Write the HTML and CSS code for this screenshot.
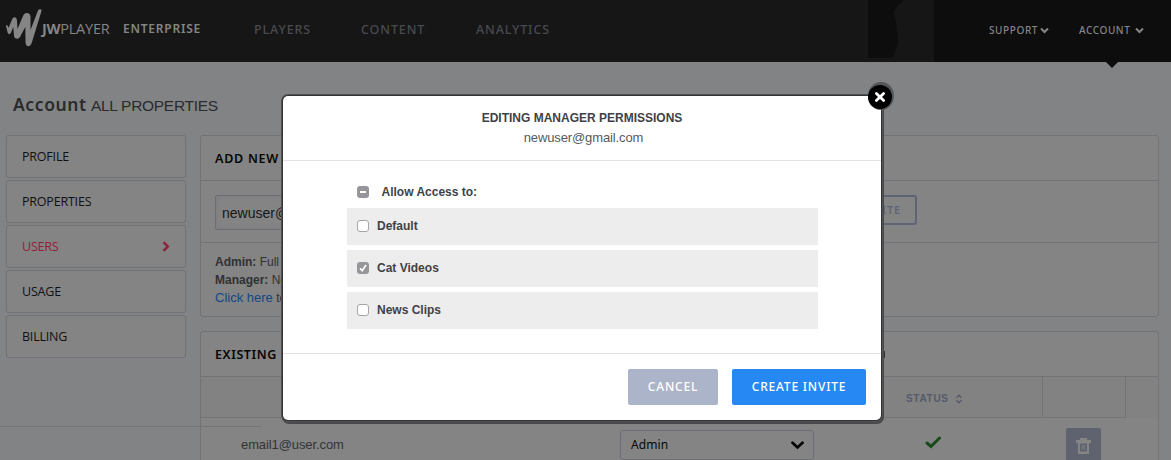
FILE: index.html
```html
<!DOCTYPE html>
<html lang="en">
<head>
<meta charset="utf-8">
<title>Account – Users</title>
<link rel="stylesheet" href="styles.css">
</head>
<body>
<header class="topbar">
  <svg class="topbar-art" width="36" height="59" viewBox="0 0 36 59"><path d="M0 0H35V2C30 4 26 9 26 14C28 22 30 32 30 40C30 49 26 49 26 57C20 59 8 57 0 58Z" fill="#0d0d0d"/></svg>
  <div class="brand">
    <svg class="logo" width="37" height="40" viewBox="0 0 37 40"><path d="M1 18C1 16 3 17 3.500 20L7 11.500C8.500 8 12 9 12 13L12.500 21L18 8C19.500 3.500 25.500 4 25.500 9L25.500 22L33 2.500C34 .5 37 1 36.500 3L27 34C25.500 40 20.500 39.500 20.500 34L20.300 19L15 29C13 32 9.500 31 9 28L8.300 19L6 24.500C5 27 3 26.500 2.500 24Z" fill="#858585"/></svg>
    <span class="brand-name"><b>JW</b>PLAYER</span>
    <span class="brand-plan">ENTERPRISE</span>
  </div>
  <nav class="main-nav"><a class="n-players">PLAYERS</a><a class="n-content">CONTENT</a><a class="n-analytics">ANALYTICS</a></nav>
  <div class="user-nav">
    <a class="support">SUPPORT</a><svg class="caret" width="9" height="7" viewBox="0 0 9 7"><path d="M1 1.500L4.500 5L8 1.500"/></svg>
    <a class="account">ACCOUNT</a><svg class="caret" width="9" height="7" viewBox="0 0 9 7"><path d="M1 1.500L4.500 5L8 1.500"/></svg>
    <i class="notch"></i>
  </div>
</header>
<h1 class="title"><b>Account</b><span>ALL PROPERTIES</span></h1>
<div class="layout">
  <aside class="side">
    <ul class="menu">
      <li><span>PROFILE</span></li>
      <li><span>PROPERTIES</span></li>
      <li class="active"><span>USERS</span><svg width="8" height="11" viewBox="0 0 8 11"><path d="M1.500 1.200L5.800 5.500L1.500 9.800"/></svg></li>
      <li><span>USAGE</span></li>
      <li><span>BILLING</span></li>
    </ul>
    <hr class="rule">
  </aside>
  <main class="content">
    <section class="card add">
      <h2>ADD NEW USER</h2>
      <div class="form"><div class="input">newuser@gmail.com</div><div class="outline-btn">INVITE</div></div>
      <div class="help"><b>Admin:</b> Full access<br><b>Manager:</b> No access<br><a>Click here</a> to learn more</div>
    </section>
    <section class="card existing">
      <div class="existing-head"><h2>EXISTING USERS</h2><i class="mark"></i></div>
      <div class="thead">
        <div class="th status">STATUS<svg width="8" height="10" viewBox="0 0 8 10"><path d="M1.500 3.800L4 1.300L6.500 3.800M1.500 6.200L4 8.700L6.500 6.200"/></svg></div>
        <div class="th actions"></div><div class="th"></div>
      </div>
      <div class="row">
        <span class="email">email1@user.com</span>
        <div class="select"><span>Admin</span><svg width="13" height="9" viewBox="0 0 13 9"><path d="M1.500 1.700L6.500 6.500L11.500 1.700"/></svg></div>
        <svg class="check" width="17" height="13" viewBox="0 0 17 13"><path d="M2 7L6 10.500L14.500 2"/></svg>
        <div class="trash"><svg width="15" height="16" viewBox="0 0 15 16"><path d="M4 0H11V2H15V5H13V16H2V5H0V2H4Z" fill="#858585"/><path d="M4 5.500H11V13.500H4Z" fill="#5f6370"/><path d="M5.500 7H9.500V12H5.500Z" fill="#6f727a"/></svg></div>
      </div>
    </section>
  </main>
</div>
<div class="dialog">
  <div class="halo"></div>
  <button class="close"><svg width="12" height="12" viewBox="0 0 12 12"><path d="M2.400 2.400L9.600 9.600M9.600 2.400L2.400 9.600"/></svg></button>
  <div class="dialog-head"><strong>EDITING MANAGER PERMISSIONS</strong><span>newuser@gmail.com</span></div>
  <div class="dialog-body">
    <div class="all"><i class="box on"><svg width="12" height="12"><path d="M3 6H9"/></svg></i><span>Allow Access to:</span></div>
    <div class="opt"><i class="box"></i><span>Default</span></div>
    <div class="opt"><i class="box on"><svg width="12" height="12"><path class="thin" d="M3 6.300L5.200 8.700L9 3"/></svg></i><span>Cat Videos</span></div>
    <div class="opt"><i class="box"></i><span>News Clips</span></div>
  </div>
  <div class="dialog-foot"><button class="btn cancel">CANCEL</button><button class="btn create">CREATE INVITE</button></div>
</div>
</body>
</html>
```
FILE: styles.css
```css
* { box-sizing: border-box; }
body { margin: 0; width: 1171px; height: 460px; overflow: hidden; position: relative; background: #828385; font-family: "Liberation Sans", Arial, sans-serif; font-size: 12px; color: #26272a; white-space: nowrap; }
h1, h2, ul { margin: 0; padding: 0; }
svg { display: block; flex: none; }

.topbar { position: relative; display: flex; height: 62px; background: #161616; font-family: "Noto Sans", sans-serif; }
.topbar-art { position: absolute; left: 868px; top: 0; }
.brand { display: flex; width: 254px; padding-left: 5px; color: #858585; }
.logo { margin-top: 8px; }
.brand-name { width: 81px; padding-top: 18px; font: 14.5px/21px "Open Sans", sans-serif; letter-spacing: -.25px; }
.brand-plan { padding-top: 19px; font-size: 12px; line-height: 20px; font-weight: 600; letter-spacing: .77px; }
.main-nav { display: flex; width: 680px; padding-top: 19px; font-size: 12.5px; line-height: 21px; font-weight: 500; letter-spacing: .9px; color: #484a51; }
.n-players { width: 107px; }
.n-content { width: 115px; }
.user-nav { position: relative; display: flex; flex: 1; padding: 22px 0 0 55px; background: #0d0d0d; color: #858585; font-size: 10px; line-height: 16px; font-weight: 500; letter-spacing: .6px; }
.support { width: 51px; }
.account { margin-left: 30px; width: 56px; }
.caret { margin-top: 5px; }
.caret path { fill: none; stroke: #858585; stroke-width: 2; }
.notch { position: absolute; left: 172px; top: 62px; border: 6px solid transparent; border-top-color: #0d0d0d; border-bottom: 0; }

.title { display: flex; align-items: baseline; height: 73px; padding: 28px 0 0 13px; font-weight: 400; font-size: 15.5px; line-height: 28px; color: #2a2b2e; }
.title span { letter-spacing: -.3px; }
.title b { width: 78px; font: 600 17.5px/28px "Noto Sans", sans-serif; letter-spacing: .6px; }
.layout { display: flex; height: 325px; padding-left: 6px; }
.side { width: 194px; }
.menu { width: 180px; display: grid; gap: 2px; list-style: none; }
.menu li { display: flex; align-items: center; justify-content: space-between; height: 43px; padding: 0 15px; border: 1px solid #717377; border-radius: 2px; background: #848484; color: #111112; font: 400 12.5px/20px "Open Sans", sans-serif; letter-spacing: -.2px; }
.menu .active { color: #901f3c; }
.menu path { fill: none; stroke: #901f3c; stroke-width: 2.4; }
.rule { width: 261px; height: 1px; margin: 68px 0 0 -6px; border: 0; background: #747578; position: relative; }

.content { width: 959px; }
.card { border: 1px solid #717377; border-radius: 3px; background: #848484; }
.card h2 { height: 45px; padding-left: 14px; border-bottom: 1px solid #717377; font: 600 12.5px/45px "Noto Sans", sans-serif; letter-spacing: .75px; color: #060607; }
.add { height: 182px; margin-bottom: 14px; }
.form { display: flex; justify-content: space-between; width: 716px; height: 61px; padding: 14px 0 0 14px; }
.input { width: 300px; height: 35px; padding-left: 6px; border: 1px solid #6c6e76; border-radius: 2px; font-size: 14px; line-height: 35px; color: #171719; box-shadow: inset 0 0 5px #7b7b7b; }
.outline-btn { width: 92px; height: 30px; border: 2px solid #5e6473; border-radius: 3px; color: #5e6473; text-align: right; padding-right: 14px; font: 600 11px/26px "Noto Sans", sans-serif; letter-spacing: .8px; }
.help { height: 74px; padding: 10px 14px; border-top: 1px solid #717377; line-height: 18px; color: #303134; }
.help a { color: #124784; font-size: 13px; }
.existing { height: 150px; }
.existing h2 { letter-spacing: .6px; word-spacing: -.5px; }
.existing-head { position: relative; }
.mark { position: absolute; left: 682px; top: 19px; width: 2px; height: 7px; background: #333; }
.thead { display: grid; grid-template-columns: 842px 83px 1fr; height: 41px; background: #828282; }
.th { border-bottom: 1px solid #747578; border-right: 1px solid #717377; }
.th:last-child { border: 0; }
.status { display: flex; align-items: center; gap: 6px; padding: 3px 0 0 705px; font: bold 10px/16px "Liberation Sans", sans-serif; letter-spacing: .7px; color: #555b6a; }
.status path { fill: none; stroke: #555b6a; stroke-width: 1.5; }
.row { display: flex; height: 60px; padding-left: 40px; color: #333437; }
.email { width: 379px; padding-top: 17px; font-size: 13px; line-height: 19px; letter-spacing: -.1px; }
.select { display: flex; justify-content: space-between; align-items: center; width: 194px; height: 30px; margin-top: 12px; padding: 0 9px 0 10px; border: 1px solid #6c6e76; border-radius: 3px; font: 12px/20px "Noto Sans", sans-serif; letter-spacing: .1px; color: #080808; }
.select path { fill: none; stroke: #050505; stroke-width: 2.7; stroke-linecap: round; }
.check { margin: 18px 0 0 111px; }
.check path { fill: none; stroke: #194a1a; stroke-width: 3; stroke-linecap: round; }
.trash { width: 35px; height: 36px; margin: 10px 0 0 124px; padding: 10px; border-radius: 2px; background: #5f6370; }

.dialog { position: absolute; left: 283px; top: 96px; width: 598px; height: 324px; border-radius: 5px; background: #fff; color: #414246; box-shadow: 0 0 0 1px #353538, 0 0 0 2px #505153, 1px 2px 0 2px #48494b; }
.close { position: absolute; left: 585px; top: -11px; width: 24px; height: 24px; padding: 6px; border: 0; border-radius: 50%; background: #000; }
.close path { fill: none; stroke: #fff; stroke-width: 2.8; stroke-linecap: round; }
.halo { position: absolute; left: 585px; top: -14px; width: 26px; height: 28px; border-radius: 50%; background: #555658; }
.dialog-head { display: flex; flex-direction: column; align-items: center; height: 65px; padding-top: 13px; border-bottom: 1px solid #e3e3e4; line-height: 19px; }
.dialog-head span { padding-left: 3px; font-size: 13px; letter-spacing: -.12px; color: #58595c; }
.dialog-body { height: 193px; padding: 23px 63px 0 64px; font-weight: 700; border-bottom: 1px solid #e3e3e4; }
.all, .opt { display: flex; padding-left: 10px; }
.all { height: 24px; padding-top: 2px; }
.all span { margin-left: 12.5px; line-height: 12px; }
.opt { height: 37px; margin-bottom: 5px; padding-top: 12px; background: #ededed; }
.opt span { margin-left: 8px; line-height: 12px; }
.box { width: 12px; height: 12px; border: 1px solid #a5a6aa; border-radius: 3px; background: #fff; }
.box.on { border: 0; background: #96969a; }
.box path { fill: none; stroke: #fff; stroke-width: 2; }
.box .thin { stroke-width: 1.7; }
.dialog-foot { display: flex; justify-content: flex-end; gap: 14px; padding: 15px 15px 0 0; }
.btn { height: 36px; padding: 0; border: 0; border-radius: 2px; color: #fff; font: 500 12px/36px "Noto Sans", sans-serif; letter-spacing: .8px; }
.cancel { width: 90px; background: #abb4c8; }
.create { width: 134px; background: #2688f2; }
```
